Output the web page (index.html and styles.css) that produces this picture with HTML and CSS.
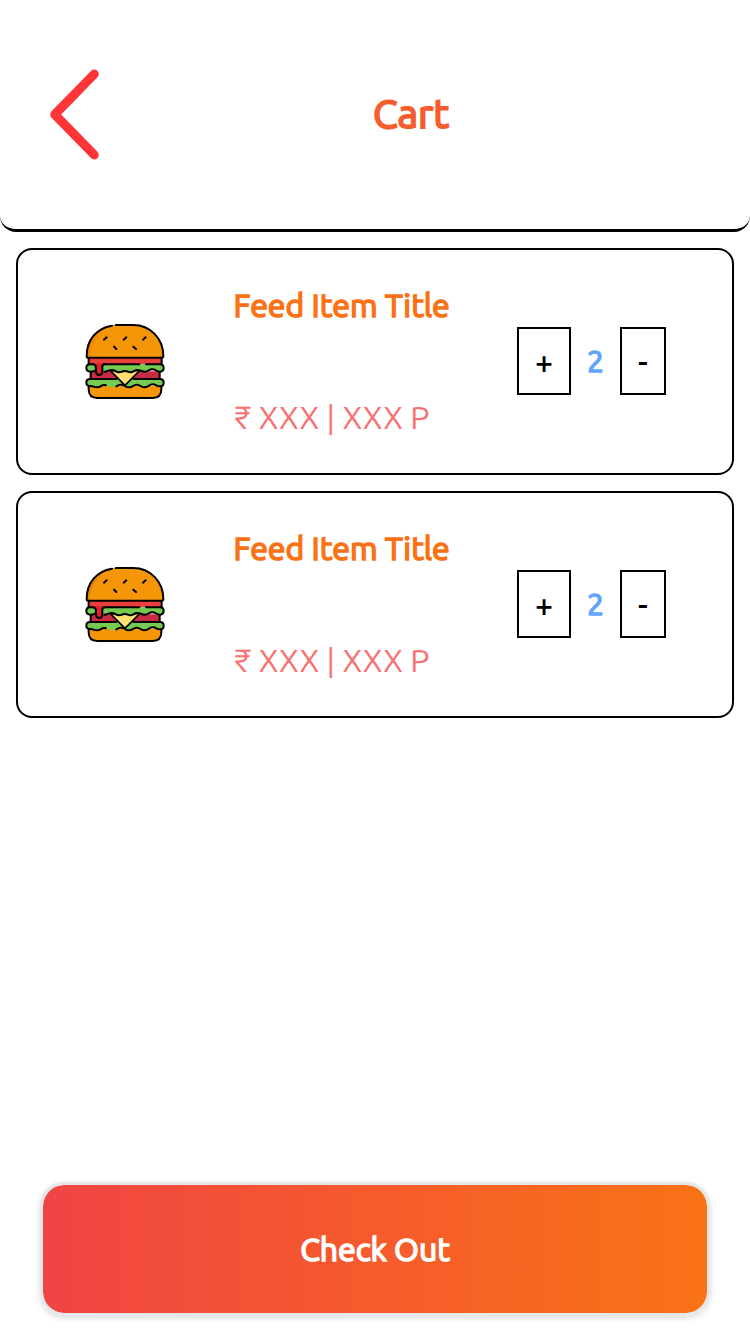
FILE: index.html
```html
<!DOCTYPE html>
<html lang="en">
<head>
<meta charset="utf-8">
<meta name="viewport" content="width=device-width, initial-scale=1">
<title>Cart</title>
<link rel="stylesheet" href="styles.css">
</head>
<body class="page">
<svg class="sprite" aria-hidden="true">
  <symbol id="burger" viewBox="48 33 240 240" overflow="visible">
    <path fill="#f59608" d="M50 143C50 85 85 45 135 45H190C240 45 280 85 280 143Z"/>
    <path fill="#ee8700" d="M50 143C50 92 76 60 110 49C78 75 62 105 60 143Z"/>
    <path fill="#e9403f" d="M56 144H275V163H56Z"/>
    <path fill="#c92b45" d="M60 184H270V208H60Z"/>
    <path fill="#f59608" d="M56 228H274V240Q274 264 250 264H80Q56 264 56 240Z"/>
    <path fill="#77ca50" d="M60 163H270Q280 163 280 173Q280 183 270 185C258 185 259 177 247 177C235 177 236 185 224 185C212 185 214 178 202 178H124C112 178 113 185 101 185H64Q50 185 50 174Q50 163 60 163Z"/>
    <path fill="#77ca50" d="M60 207H270Q280 207 280 218Q280 229 270 229C258 229 260 223 248 223C236 223 237 232 224 232C212 232 212 224 200 224C188 224 190 232 178 232C164 232 166 224 153 224C140 224 142 232 129 232C115 232 117 225 104 225C92 225 94 232 82 232C70 232 71 228 62 228Q50 228 50 218Q50 207 60 207Z"/>
    <path fill="#ffe070" stroke="#000" stroke-width="5" stroke-linejoin="round" d="M121 182H209L165 226Z"/>
    <path fill="#77ca50" d="M120 167H212V182C200 187 198 180 187 184C177 189 175 187 165 182C155 179 153 188 143 184C132 178 132 184 120 182Z"/>
    <path fill="#e61f2b" d="M77 160H97V184Q97 196 87 196Q78 196 78 185V171Q77 165 69 163V160Z"/>
    <g fill="none" stroke="#000" stroke-width="6" stroke-linecap="round" stroke-linejoin="round">
      <path d="M137 45H190C240 45 280 85 280 138Q280 143 275 143H54Q50 143 50 138C50 90 80 54 126 47"/>
      <path d="M56 144V161M275 144V161M62 187V205M269 187V205"/>
      <path d="M69 163H60Q49 163 49 174Q49 185 62 185Q72 185 78 180M228 163H270Q281 163 281 174Q281 184 270 185C258 185 259 178 247 178C235 178 236 185 224 185C212 185 212 180 202 180C192 180 191 187 181 187C173 187 174 183 165 183C155 183 157 187 147 187C136 187 137 180 125 180C113 180 114 185 103 185M101 163H208"/>
      <path d="M69 163Q78 164 78 174V184Q78 195 87 195Q97 195 97 184V170Q97 163 105 163"/>
      <path d="M60 207H139M190 207H270Q281 207 281 218Q281 229 270 229C258 229 260 223 248 223C236 223 237 232 224 232C212 232 212 224 200 224C188 224 190 232 178 232C164 232 166 224 153 224C147 224 143 226 139 229M108 226C92 222 95 232 82 232C70 232 71 228 62 228Q49 228 49 218Q49 207 60 207"/>
      <path d="M56 230V238Q56 264 82 264H248Q274 264 274 238V230"/>
      <path d="M102 89L110 82M161 89L169 82M219 89L227 82M132 110L139 117M190 110L198 117"/>
    </g>
  </symbol>
</svg>

<header class="topbar">
  <button class="back" type="button" aria-label="Back">
    <svg class="back-icon" viewBox="0 0 50 90" aria-hidden="true"><path d="M45 5L6 45L45 85"/></svg>
  </button>
  <h1 class="title">Cart</h1>
</header>

<main class="items">
  <article class="card">
    <svg class="picture" role="img" aria-label="Burger"><use href="#burger"/></svg>
    <div class="info">
      <h2 class="name">Feed Item Title</h2>
      <p class="price">₹ XXX | XXX P</p>
    </div>
    <div class="quantity">
      <button class="step" type="button" aria-label="Add one">+</button>
      <span class="count">2</span>
      <button class="step" type="button" aria-label="Remove one">-</button>
    </div>
  </article>
  <article class="card">
    <svg class="picture" role="img" aria-label="Burger"><use href="#burger"/></svg>
    <div class="info">
      <h2 class="name">Feed Item Title</h2>
      <p class="price">₹ XXX | XXX P</p>
    </div>
    <div class="quantity">
      <button class="step" type="button" aria-label="Add one">+</button>
      <span class="count">2</span>
      <button class="step" type="button" aria-label="Remove one">-</button>
    </div>
  </article>
</main>

<footer class="footer">
  <button class="checkout" type="button">Check Out</button>
</footer>
</body>
</html>
```

FILE: styles.css
```css
* {
  box-sizing: border-box;
}

.page {
  display: flex;
  flex-direction: column;
  min-height: 100vh;
  margin: 0;
  background: #fff;
  font-family: Ubuntu, "Noto Sans", sans-serif;
}

.sprite {
  position: absolute;
  width: 0;
  height: 0;
}

.topbar {
  display: flex;
  align-items: center;
  padding: 65px 28px 67px 48px;
  border-bottom: 3px solid #000;
  border-radius: 0 0 16px 16px;
}

.back {
  display: flex;
  padding: 4px 0 2px;
  border: 0;
  background: none;
}

.back-icon {
  width: 52px;
  height: 91px;
  fill: none;
  stroke: #ff3538;
  stroke-width: 9;
  stroke-linecap: round;
  stroke-linejoin: round;
}

.title,
.name,
.count,
.checkout {
  font-weight: 400;
  -webkit-text-stroke: 0.05em;
}

.title {
  flex: 1;
  margin: 0;
  text-align: center;
  font-size: 40px;
  line-height: 48px;
  color: #f65c2e;
}

.items {
  display: flex;
  flex-direction: column;
  gap: 16px;
  padding: 16px;
}

.card {
  display: grid;
  grid-template-columns: 216fr 218fr 282fr;
  align-items: center;
  padding: 31px 0 32px;
  border: 2px solid #000;
  border-radius: 16px;
}

.picture {
  justify-self: center;
  width: 80px;
  height: 80px;
  overflow: visible;
}

.info {
  display: flex;
  flex-direction: column;
  gap: 64px;
  white-space: nowrap;
}

.name,
.price {
  margin: 0;
  font-size: 32px;
  line-height: 48px;
}

.name {
  color: #f97316;
}

.price {
  font-weight: 400;
  color: #f87171;
}

.quantity {
  display: flex;
  align-items: center;
  justify-content: center;
  gap: 16px;
}

.step {
  padding: 8px 16px;
  border: 2px solid #000;
  border-radius: 0;
  background: #fff;
  color: #000;
  font-family: inherit;
  font-size: 32px;
  line-height: 48px;
  font-weight: 500;
}

.count {
  font-size: 30px;
  line-height: 48px;
  color: #60a5fa;
}

.footer {
  display: flex;
  margin-top: auto;
  padding: 16px 40px 18px;
}

.checkout {
  flex: 1;
  padding: 40px 16px;
  border: 3px solid #e5e7eb;
  border-radius: 24px;
  background: linear-gradient(to right, #ef4444, #f65b2c 50%, #f97316) padding-box;
  box-shadow: 0 2px 6px rgba(0, 0, 0, 0.15);
  color: #fff;
  font-family: inherit;
  font-size: 32px;
  line-height: 48px;
}
```
